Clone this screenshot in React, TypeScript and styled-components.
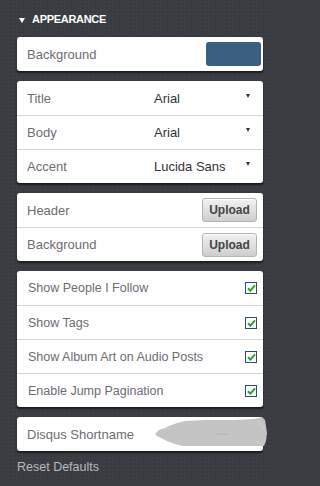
import React from 'react';
import styled, { createGlobalStyle } from 'styled-components';

const GlobalStyle = createGlobalStyle`
  html, body {
    margin: 0;
    padding: 0;
    background: #3a3d42;
  }
  body {
    font-family: "Liberation Sans", Arial, sans-serif;
  }
`;

const Panel = styled.div`
  width: 277px;
  height: 486px;
  box-sizing: border-box;
  padding: 0 14px 0 17px;
  overflow: hidden;
  background-color: #3a3d42;
  background-image:
    radial-gradient(rgba(255, 255, 255, 0.025) 1px, transparent 1px),
    radial-gradient(rgba(0, 0, 0, 0.06) 1px, transparent 1px);
  background-size: 3px 3px, 4px 4px;
  background-position: 0 0, 1px 2px;
`;

const SectionHeader = styled.div`
  display: flex;
  align-items: center;
  gap: 7px;
  height: 14px;
  padding: 12px 0 11px 2px;
  color: #ffffff;
  font-size: 11px;
  font-weight: bold;
  letter-spacing: -0.3px;
  text-transform: uppercase;
`;

const Caret = styled.span`
  width: 0;
  height: 0;
  border-left: 3.5px solid transparent;
  border-right: 3.5px solid transparent;
  border-top: 5px solid #ffffff;
  margin-top: 2px;
`;

const Stack = styled.div`
  display: flex;
  flex-direction: column;
  gap: 10px;
`;

const Card = styled.div`
  background: #ffffff;
  border-radius: 3px;
  box-shadow: 0 2px 2px rgba(0, 0, 0, 0.55);
`;

const Row = styled.div<{ $right?: number }>`
  display: flex;
  align-items: center;
  height: 34px;
  box-sizing: border-box;
  padding: 0 ${p => p.$right ?? 6}px 0 10px;
  & + & {
    border-top: 1px solid #d6d6d6;
  }
`;

const Label = styled.span<{ $small?: boolean }>`
  flex: 1;
  color: #6b6d72;
  font-size: ${p => (p.$small ? '12.5px' : '13px')};
  padding-left: ${p => (p.$small ? '1px' : '0')};
`;

const FontLabel = styled.span`
  width: 127px;
  color: #6b6d72;
  font-size: 13px;
`;

const FontValue = styled.span`
  flex: 1;
  color: #333333;
  font-size: 13px;
`;

const SelectArrow = styled.span`
  width: 0;
  height: 0;
  border-left: 2.5px solid transparent;
  border-right: 2.5px solid transparent;
  border-top: 4px solid #333333;
  margin-top: -5px;
`;

const Swatch = styled.div<{ $color: string }>`
  width: 55px;
  height: 24px;
  border-radius: 3px;
  background: ${p => p.$color};
`;

const UploadButton = styled.button`
  width: 55px;
  height: 24px;
  box-sizing: border-box;
  padding: 0;
  border: 1px solid #b3b3b3;
  border-radius: 3px;
  background: linear-gradient(#f2f2f2, #cdcdcd);
  color: #444444;
  font-family: "Liberation Sans", Arial, sans-serif;
  font-size: 12px;
  font-weight: bold;
  box-shadow: inset 0 1px 0 rgba(255, 255, 255, 0.8);
`;

const Check = styled.span`
  display: flex;
  align-items: center;
  justify-content: center;
  width: 12px;
  height: 12px;
  box-sizing: border-box;
  border: 1.5px solid #2b4f70;
  background: #ffffff;
`;

const Scribble = styled.svg`
  width: 112px;
  height: 30px;
  margin-right: -10px;
  margin-bottom: 4px;
  overflow: visible;
`;

const ResetLink = styled.div`
  padding-top: 9px;
  color: #b9bbbe;
  font-size: 12.5px;
`;

const fonts = [
  { label: 'Title', value: 'Arial' },
  { label: 'Body', value: 'Arial' },
  { label: 'Accent', value: 'Lucida Sans' },
];

const toggles = [
  'Show People I Follow',
  'Show Tags',
  'Show Album Art on Audio Posts',
  'Enable Jump Pagination',
];

function CheckBox() {
  return (
    <Check>
      <svg width="9" height="8" viewBox="0 0 9 8">
        <path d="M1 4.2 L3.4 6.6 L8 1.4" fill="none" stroke="#27a327" strokeWidth="2" />
      </svg>
    </Check>
  );
}

export default function App() {
  return (
    <>
      <GlobalStyle />
      <Panel>
        <SectionHeader>
          <Caret />
          Appearance
        </SectionHeader>
        <Stack>
          <Card>
            <Row $right={2}>
              <Label>Background</Label>
              <Swatch $color="#3b607f" />
            </Row>
          </Card>

          <Card>
            {fonts.map(f => (
              <Row key={f.label} $right={13}>
                <FontLabel>{f.label}</FontLabel>
                <FontValue>{f.value}</FontValue>
                <SelectArrow />
              </Row>
            ))}
          </Card>

          <Card>
            <Row>
              <Label>Header</Label>
              <UploadButton>Upload</UploadButton>
            </Row>
            <Row>
              <Label>Background</Label>
              <UploadButton>Upload</UploadButton>
            </Row>
          </Card>

          <Card>
            {toggles.map(t => (
              <Row key={t}>
                <Label $small>{t}</Label>
                <CheckBox />
              </Row>
            ))}
          </Card>

          <Card>
            <Row>
              <Label>Disqus Shortname</Label>
              <Scribble viewBox="0 0 112 30">
                <path
                  d="M0 17 L4 13 L10 11 L14 9 L22 6 L30 4 L50 3 L80 3 L98 2 L104 1 L107 0 L110 3 L111 9 L112 16 L111 24 L109 29 L96 29 L70 29 L40 29 L28 29 L20 27 L12 24 L6 21 L2 19 Z"
                  fill="#c4c4c4"
                />
                <path d="M9 12 L14 11 M103 4 L109 12 M100 24 L108 27" stroke="#d2d2d2" strokeWidth="1" />
                <path d="M60 17 L72 17" stroke="#aaaaaa" strokeWidth="0.6" />
              </Scribble>
            </Row>
          </Card>
        </Stack>
        <ResetLink>Reset Defaults</ResetLink>
      </Panel>
    </>
  );
}
